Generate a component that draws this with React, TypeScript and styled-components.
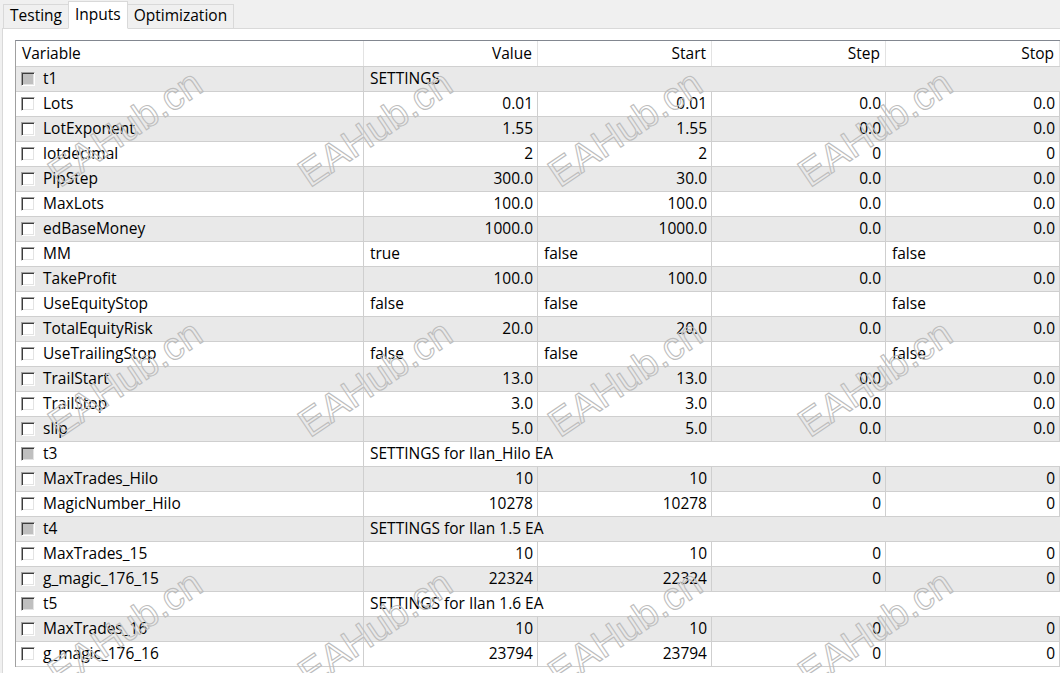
import React from "react";
import styled, { createGlobalStyle } from "styled-components";

const GlobalStyle = createGlobalStyle`
  html, body {
    margin: 0;
    padding: 0;
    background: #f0f0f0;
    overflow: hidden;
  }
  body {
    font-family: "Open Sans", "Noto Sans", "Liberation Sans", sans-serif;
    font-size: 15.5px;
    color: #000;
  }
  * { box-sizing: border-box; }
`;

const Window = styled.div`
  width: 1060px;
  height: 673px;
  display: flex;
  flex-direction: column;
  overflow: hidden;
  background: #f0f0f0;
`;

const TabStrip = styled.div`
  height: 28px;
  display: flex;
  align-items: flex-end;
  padding-left: 3px;
  position: relative;
  z-index: 1;
`;

const Tab = styled.div<{ $active?: boolean }>`
  height: ${(p) => (p.$active ? "28px" : "24px")};
  padding: 0 6px 1px;
  display: flex;
  align-items: center;
  background: ${(p) => (p.$active ? "#ffffff" : "#f0f0f0")};
  border: 1px solid #d9d9d9;
  border-bottom: ${(p) => (p.$active ? "1px solid #ffffff" : "none")};
  margin-bottom: ${(p) => (p.$active ? "-1px" : "0")};
  line-height: 1;
  white-space: nowrap;
  & + & { margin-left: -1px; }
`;

const Panel = styled.div`
  flex: 1;
  margin-left: 2px;
  background: #ffffff;
  border-top: 1px solid #d9d9d9;
  border-left: 1px solid #d9d9d9;
  padding: 11px 0 0 12px;
  position: relative;
  overflow: hidden;
`;

const Table = styled.div`
  width: 1060px;
  border-top: 1px solid #828790;
  border-left: 1px solid #a0a0a0;
  background: #ffffff;
`;

const COLS = "348px 174px 174px 174px 174px";

const HeaderRow = styled.div`
  display: grid;
  grid-template-columns: ${COLS};
  height: 26px;
  border-bottom: 1px solid #d0d0d0;
  background: #ffffff;
`;

const HeaderCell = styled.div<{ $left?: boolean }>`
  display: flex;
  align-items: center;
  justify-content: ${(p) => (p.$left ? "flex-start" : "flex-end")};
  padding: 0 5px 2px 6px;
  border-right: 1px solid #e3e3e3;
  white-space: nowrap;
`;

const Row = styled.div<{ $shaded?: boolean }>`
  display: grid;
  grid-template-columns: ${COLS};
  height: 25px;
  border-bottom: 1px solid #cfcfcf;
  background: ${(p) => (p.$shaded ? "#e9e9e9" : "#ffffff")};
`;

const Cell = styled.div<{ $align?: "left" | "right"; $span?: boolean }>`
  display: flex;
  align-items: center;
  justify-content: ${(p) => (p.$align === "left" ? "flex-start" : "flex-end")};
  padding: 0 4px 2px 6px;
  border-right: ${(p) => (p.$span ? "none" : "1px solid #cfcfcf")};
  grid-column: ${(p) => (p.$span ? "2 / 6" : "auto")};
  white-space: nowrap;
  overflow: hidden;
`;

const NameCell = styled.div`
  display: flex;
  align-items: center;
  gap: 8px;
  padding: 0 0 2px 5px;
  border-right: 1px solid #cfcfcf;
  white-space: nowrap;
`;

const CheckBox = styled.span<{ $group?: boolean }>`
  display: block;
  width: 14px;
  height: 14px;
  flex: 0 0 14px;
  margin-top: 2px;
  background: ${(p) => (p.$group ? "#bfbfbf" : "#ffffff")};
  border-top: 1px solid #a0a0a0;
  border-left: 1px solid #a0a0a0;
  border-right: 1px solid #ffffff;
  border-bottom: 1px solid #ffffff;
  box-shadow: inset 1px 1px 0 #3c3c3c, inset -1px -1px 0 #e3e3e3;
`;

const WatermarkLayer = styled.div`
  position: absolute;
  inset: 0;
  pointer-events: none;
  overflow: hidden;
`;

const Mark = styled.div`
  position: absolute;
  transform: translate(-50%, -50%) rotate(-34deg);
  font-family: "Liberation Sans", Arial, sans-serif;
  font-size: 39px;
  color: transparent;
  -webkit-text-stroke: 1.1px #bdbdbd;
  white-space: nowrap;
  line-height: 1;
`;

type DataRow =
  | { kind: "group"; name: string; label: string }
  | {
      kind: "param";
      name: string;
      value: string;
      start: string;
      step: string;
      stop: string;
      bool?: boolean;
    };

const p = (name: string, value: string, start: string, step: string, stop: string): DataRow => ({
  kind: "param",
  name,
  value,
  start,
  step,
  stop,
});
const b = (name: string, value: string, start: string, stop: string): DataRow => ({
  kind: "param",
  name,
  value,
  start,
  step: "",
  stop,
  bool: true,
});
const g = (name: string, label: string): DataRow => ({ kind: "group", name, label });

const rows: DataRow[] = [
  g("t1", "SETTINGS"),
  p("Lots", "0.01", "0.01", "0.0", "0.0"),
  p("LotExponent", "1.55", "1.55", "0.0", "0.0"),
  p("lotdecimal", "2", "2", "0", "0"),
  p("PipStep", "300.0", "30.0", "0.0", "0.0"),
  p("MaxLots", "100.0", "100.0", "0.0", "0.0"),
  p("edBaseMoney", "1000.0", "1000.0", "0.0", "0.0"),
  b("MM", "true", "false", "false"),
  p("TakeProfit", "100.0", "100.0", "0.0", "0.0"),
  b("UseEquityStop", "false", "false", "false"),
  p("TotalEquityRisk", "20.0", "20.0", "0.0", "0.0"),
  b("UseTrailingStop", "false", "false", "false"),
  p("TrailStart", "13.0", "13.0", "0.0", "0.0"),
  p("TrailStop", "3.0", "3.0", "0.0", "0.0"),
  p("slip", "5.0", "5.0", "0.0", "0.0"),
  g("t3", "SETTINGS for Ilan_Hilo EA"),
  p("MaxTrades_Hilo", "10", "10", "0", "0"),
  p("MagicNumber_Hilo", "10278", "10278", "0", "0"),
  g("t4", "SETTINGS for Ilan 1.5 EA"),
  p("MaxTrades_15", "10", "10", "0", "0"),
  p("g_magic_176_15", "22324", "22324", "0", "0"),
  g("t5", "SETTINGS for Ilan 1.6 EA"),
  p("MaxTrades_16", "10", "10", "0", "0"),
  p("g_magic_176_16", "23794", "23794", "0", "0"),
];

// watermark centers relative to the panel (panel origin at x=3, y=29)
const marks: { x: number; y: number }[] = [];
for (const y of [99, 349, 599]) {
  for (const x of [122, 372, 622, 872]) {
    marks.push({ x, y });
  }
}

export default function App() {
  return (
    <>
      <GlobalStyle />
      <Window>
        <TabStrip>
          <Tab>Testing</Tab>
          <Tab $active>Inputs</Tab>
          <Tab>Optimization</Tab>
        </TabStrip>
        <Panel>
          <Table>
            <HeaderRow>
              <HeaderCell $left>Variable</HeaderCell>
              <HeaderCell>Value</HeaderCell>
              <HeaderCell>Start</HeaderCell>
              <HeaderCell>Step</HeaderCell>
              <HeaderCell>Stop</HeaderCell>
            </HeaderRow>
            {rows.map((r, i) => (
              <Row key={r.name} $shaded={i % 2 === 0}>
                <NameCell>
                  <CheckBox $group={r.kind === "group"} />
                  {r.name}
                </NameCell>
                {r.kind === "group" ? (
                  <Cell $align="left" $span>
                    {r.label}
                  </Cell>
                ) : (
                  <>
                    <Cell $align={r.bool ? "left" : "right"}>{r.value}</Cell>
                    <Cell $align={r.bool ? "left" : "right"}>{r.start}</Cell>
                    <Cell $align={r.bool ? "left" : "right"}>{r.step}</Cell>
                    <Cell $align={r.bool ? "left" : "right"}>{r.stop}</Cell>
                  </>
                )}
              </Row>
            ))}
          </Table>
          <WatermarkLayer>
            {marks.map((m, i) => (
              <Mark key={i} style={{ left: m.x, top: m.y }}>
                EAHub.cn
              </Mark>
            ))}
          </WatermarkLayer>
        </Panel>
      </Window>
    </>
  );
}
